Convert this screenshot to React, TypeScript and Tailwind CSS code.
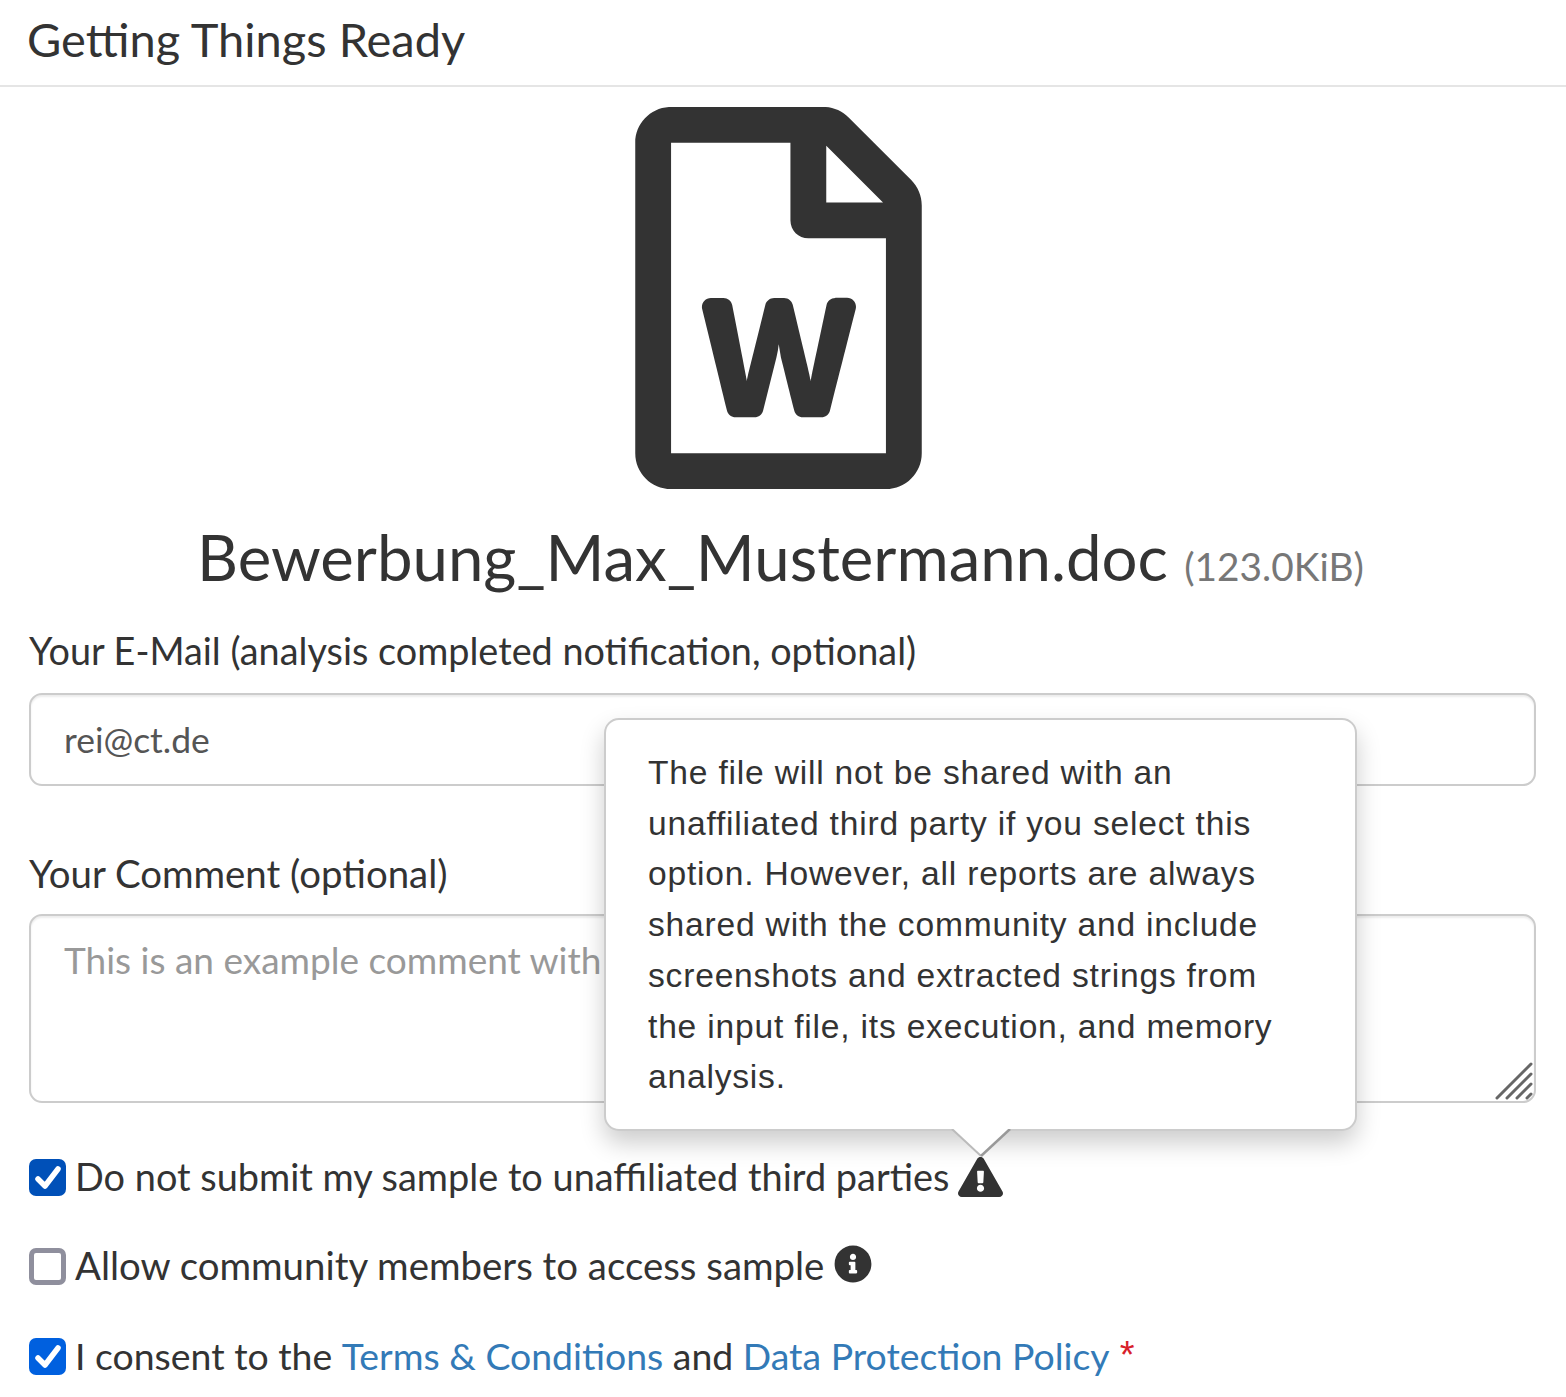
import { FaRegFileWord, FaExclamationTriangle, FaInfoCircle } from 'react-icons/fa';

function Check() {
  return (
    <svg viewBox="0 0 37 37" className="h-full w-full" fill="none">
      <path d="M9 20l7 7L29 10" stroke="#fff" strokeWidth="5.5" strokeLinecap="round" strokeLinejoin="round" />
    </svg>
  );
}

export default function App() {
  return (
    <div className="relative h-[1397px] w-[1566px] overflow-hidden bg-white font-['Lato',sans-serif] text-[#333]">
      <header className="flex h-[87px] items-center border-b-2 border-[#e5e5e5] pb-[6px] pl-[27px]">
        <h1 className="text-[47px] leading-none">Getting Things Ready</h1>
      </header>

      <div className="flex flex-col items-center pt-[20px]">
        <FaRegFileWord className="mr-[10px] h-[382px] w-[287px] text-[#333]" />
        <h2 className="mr-[5px] mt-[28px] text-center text-[63.5px] leading-[80px]">
          Bewerbung_Max_Mustermann.doc <small className="text-[38.8px] text-[#777]">(123.0KiB)</small>
        </h2>
      </div>

      <div className="px-[29px] pt-[20px]">
        <label className="block text-[37.8px] leading-[50px]">Your E-Mail (analysis completed notification, optional)</label>
        <input
          defaultValue="rei@ct.de"
          className="mt-[17px] block h-[93px] w-[1507px] rounded-[13px] border-2 border-[#ccc] px-[33px] text-[35.5px] text-[#555] shadow-[inset_0_2px_2px_rgba(0,0,0,0.075)] outline-none"
        />

        <label className="mt-[62px] block text-[38.4px] leading-[50px]">Your Comment (optional)</label>
        <div className="relative mt-[16px] h-[189px] w-[1507px]">
          <textarea
            placeholder="This is an example comment with some more text"
            className="block h-full w-full resize-none rounded-[13px] border-2 border-[#ccc] px-[33px] py-[19px] text-[37px] leading-[50px] shadow-[inset_0_2px_2px_rgba(0,0,0,0.075)] outline-none placeholder:text-[#999]"
          />
          <svg viewBox="0 0 38 38" className="absolute bottom-[3px] right-[3px] h-[38px] w-[38px]" stroke="#666" strokeWidth="3" strokeLinecap="round">
            <path d="M2 36L36 2M12 36L36 12M22 36L36 22M32 36l4-4" />
          </svg>
        </div>

        <div className="mt-[49px] flex h-[50px] items-center text-[37.9px]">
          <span className="mr-[9px] h-[37px] w-[37px] rounded-[7px] bg-[#0050b8]"><Check /></span>
          Do not submit my sample to unaffiliated third parties
          <FaExclamationTriangle className="ml-[9px] h-[40px] w-[45px] text-[#333]" />
        </div>

        <div className="mt-[39px] flex h-[50px] items-center text-[38.4px]">
          <span className="mr-[9px] h-[37px] w-[37px] rounded-[7px] border-[5px] border-[#8f8f9d] bg-white" />
          Allow community members to access sample
          <FaInfoCircle className="mb-[4px] ml-[10px] h-[38px] w-[38px] text-[#333]" />
        </div>

        <div className="mt-[40px] flex h-[50px] items-center whitespace-pre text-[37.4px]">
          <span className="mr-[9px] h-[37px] w-[37px] rounded-[7px] bg-[#0060df]"><Check /></span>
          {'I consent to the '}
          <a className="text-[#337ab7]">Terms &amp; Conditions</a>
          {' and '}
          <a className="text-[#337ab7]">Data Protection Policy</a>
          <span className="mb-[2px] ml-[10px] font-['Liberation_Sans',sans-serif] text-[38px] text-[#d8202a]">*</span>
        </div>
      </div>

      <div className="absolute left-[604px] top-[718px] w-[753px] rounded-[15px] border-2 border-[#ccc] bg-white px-[42px] pb-[26px] pt-[28px] font-['Liberation_Sans',sans-serif] text-[33.6px] leading-[50.7px] tracking-[0.8px] shadow-[0_12px_24px_rgba(0,0,0,0.2)]">
        The file will not be shared with an unaffiliated third party if you select this option. However, all reports are always shared with the community and include screenshots and extracted strings from the input file, its execution, and memory analysis.
        <svg viewBox="0 0 60 28" className="absolute left-[345px] top-full h-[28px] w-[60px]">
          <path d="M1 0L30 27L59 0Z" fill="#fff" />
          <path d="M1 0L30 27" fill="none" stroke="#bbb" strokeWidth="2" />
          <path d="M30 27L59 0" fill="none" stroke="#999" strokeWidth="2.5" />
        </svg>
      </div>
    </div>
  );
}
